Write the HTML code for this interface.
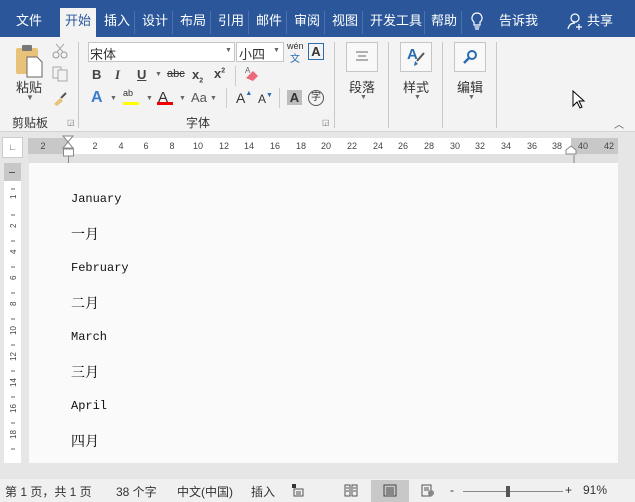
<!DOCTYPE html>
<html><head><meta charset="utf-8"><style>
*{margin:0;padding:0;box-sizing:border-box}
body{width:635px;height:502px;overflow:hidden;background:#e6e6e6;font-family:"Liberation Sans","Noto Sans CJK SC",sans-serif;position:relative;color:#333}
.a{position:absolute}
.tab{position:absolute;top:10px;color:#fff;font-size:13px}
.sep{position:absolute;top:11px;width:1px;height:23px;background:#4a72b0}
.rb{position:absolute;top:37px;left:0;width:635px;height:95px;background:#f3f3f3;border-bottom:1px solid #d4d4d4}
.vs{position:absolute;top:42px;width:1px;height:86px;background:#c8c8c8}
.lbl{position:absolute;font-size:12px;color:#333}
.ic{position:absolute;font-size:13px;font-weight:bold;color:#444}
.rn{position:absolute;top:141px;font-size:9px;color:#444;width:20px;text-align:center}
.en{position:absolute;left:71px;font-family:"Liberation Mono",monospace;font-size:12px;color:#111}
.zh{position:absolute;left:71px;font-family:"Noto Serif CJK SC","Noto Sans CJK SC",serif;font-size:14px;color:#000}
.st{position:absolute;top:483px;font-size:12px;color:#333}
</style></head><body>
<!-- title/tab bar -->
<div class="a" style="left:0;top:0;width:635px;height:37px;background:#2b579a"></div>
<div class="a" style="left:60px;top:8px;width:36px;height:30px;background:#f3f3f3"></div>
<span class="tab" style="left:16px">文件</span>
<span class="tab" style="left:65px;color:#2b579a">开始</span>
<span class="tab" style="left:104px">插入</span>
<span class="sep" style="left:134px"></span>
<span class="tab" style="left:142px">设计</span>
<span class="sep" style="left:172px"></span>
<span class="tab" style="left:180px">布局</span>
<span class="sep" style="left:210px"></span>
<span class="tab" style="left:218px">引用</span>
<span class="sep" style="left:248px"></span>
<span class="tab" style="left:256px">邮件</span>
<span class="sep" style="left:286px"></span>
<span class="tab" style="left:294px">审阅</span>
<span class="sep" style="left:324px"></span>
<span class="tab" style="left:332px">视图</span>
<span class="sep" style="left:362px"></span>
<span class="tab" style="left:370px">开发工具</span>
<span class="sep" style="left:424px"></span>
<span class="tab" style="left:431px">帮助</span>
<span class="sep" style="left:461px"></span>
<svg class="a" style="left:470px;top:12px" width="14" height="20"><path d="M7 1a5 5 0 0 0-3 9v3h6v-3a5 5 0 0 0-3-9zM4.5 15h5M5 17h4" stroke="#fff" fill="none" stroke-width="1.2"/></svg>
<span class="tab" style="left:499px">告诉我</span>
<svg class="a" style="left:567px;top:12px" width="18" height="20"><circle cx="8" cy="6" r="4" stroke="#fff" fill="none" stroke-width="1.2"/><path d="M1 17c1-5 4-6 7-6M12 12v6M9 15h6" stroke="#fff" fill="none" stroke-width="1.2"/></svg>
<span class="tab" style="left:587px">共享</span>

<!-- ribbon -->
<div class="rb"></div>
<!-- clipboard -->
<svg class="a" style="left:14px;top:44px" width="32" height="34"><rect x="2" y="4" width="22" height="26" rx="2" fill="#e9c27a"/><rect x="8" y="1" width="10" height="6" rx="1" fill="#777"/><path d="M13 13h10l5 5v15H13z" fill="#fff" stroke="#666"/></svg>
<span class="lbl" style="left:16px;top:77px;font-size:13px">粘贴</span>
<span class="lbl" style="left:26px;top:93px;font-size:8px;color:#666">▼</span>
<span class="lbl" style="left:12px;top:114px">剪贴板</span>
<svg class="a" style="left:52px;top:43px" width="16" height="16"><circle cx="4" cy="12" r="3" stroke="#999" fill="none"/><circle cx="12" cy="12" r="3" stroke="#999" fill="none"/><path d="M5 9L12 1M11 9L4 1" stroke="#aaa"/></svg>
<svg class="a" style="left:52px;top:66px" width="16" height="16"><rect x="1" y="1" width="8" height="11" fill="none" stroke="#aaa"/><rect x="6" y="4" width="9" height="11" fill="#f3f3f3" stroke="#aaa"/></svg>
<svg class="a" style="left:52px;top:90px" width="16" height="16"><path d="M2 14l6-6 3 3-6 5z" fill="#e9c27a"/><path d="M9 8l5-5" stroke="#555" stroke-width="2"/></svg>
<div class="vs" style="left:78px"></div>
<!-- font group -->
<div class="a" style="left:88px;top:42px;width:147px;height:20px;background:#fff;border:1px solid #c6c6c6"></div>
<span class="lbl" style="left:90px;top:44px;font-size:13px">宋体</span>
<span class="lbl" style="left:225px;top:47px;font-size:7px;color:#666">▼</span>
<div class="a" style="left:236px;top:42px;width:48px;height:20px;background:#fff;border:1px solid #c6c6c6"></div>
<span class="lbl" style="left:239px;top:44px;font-size:13px">小四</span>
<span class="lbl" style="left:273px;top:47px;font-size:7px;color:#666">▼</span>
<span class="lbl" style="left:287px;top:41px;font-size:9px">wén</span>
<span class="lbl" style="left:290px;top:50px;font-size:10px;color:#2b6cb0">文</span>
<div class="a" style="left:308px;top:43px;width:16px;height:17px;border:1px solid #2b6cb0;font-size:13px;font-weight:bold;text-align:center;line-height:15px;color:#333">A</div>
<span class="ic" style="left:92px;top:67px">B</span>
<span class="ic" style="left:115px;top:67px;font-style:italic;font-family:'Liberation Serif',serif">I</span>
<span class="ic" style="left:137px;top:67px;text-decoration:underline">U</span>
<span class="lbl" style="left:155px;top:71px;font-size:7px;color:#666">▼</span>
<span class="lbl" style="left:167px;top:68px;font-size:11px;text-decoration:line-through">abc</span>
<span class="ic" style="left:192px;top:67px">x<sub style="font-size:7px">2</sub></span>
<span class="ic" style="left:214px;top:66px">x<sup style="font-size:7px">2</sup></span>
<div class="a" style="left:235px;top:66px;width:1px;height:20px;background:#ccc"></div>
<svg class="a" style="left:242px;top:64px" width="20" height="20"><path d="M4 14l7-7 5 5-5 5z" fill="#e96a7a"/><text x="3" y="9" font-size="8" fill="#666" font-family="Liberation Sans">A</text></svg>
<span class="lbl" style="left:91px;top:89px;font-size:16px;color:#3a7dd0;font-weight:bold">A</span>
<span class="lbl" style="left:110px;top:95px;font-size:7px;color:#666">▼</span>
<span class="lbl" style="left:123px;top:88px;font-size:9px">ab</span>
<div class="a" style="left:123px;top:102px;width:16px;height:3px;background:#ffff00"></div>
<span class="lbl" style="left:146px;top:95px;font-size:7px;color:#666">▼</span>
<span class="lbl" style="left:158px;top:89px;font-size:15px">A</span>
<div class="a" style="left:157px;top:102px;width:16px;height:3px;background:#e00"></div>
<span class="lbl" style="left:179px;top:95px;font-size:7px;color:#666">▼</span>
<span class="lbl" style="left:191px;top:90px;font-size:13px;color:#555">Aa</span>
<span class="lbl" style="left:210px;top:95px;font-size:7px;color:#666">▼</span>
<div class="a" style="left:226px;top:88px;width:1px;height:20px;background:#ccc"></div>
<span class="lbl" style="left:236px;top:90px;font-size:14px">A<span style="font-size:7px;color:#2b6cb0;vertical-align:top">▲</span></span>
<span class="lbl" style="left:258px;top:92px;font-size:12px">A<span style="font-size:7px;color:#2b6cb0;vertical-align:top">▼</span></span>
<div class="a" style="left:279px;top:88px;width:1px;height:20px;background:#ccc"></div>
<div class="a" style="left:287px;top:90px;width:15px;height:15px;background:#bdbdbd;font-size:13px;font-weight:bold;text-align:center;line-height:15px">A</div>
<div class="a" style="left:308px;top:90px;width:16px;height:16px;border:1px solid #555;border-radius:50%;font-size:10px;text-align:center;line-height:14px">字</div>
<span class="lbl" style="left:186px;top:114px">字体</span>
<span class="lbl" style="left:67px;top:118px;font-size:8px;color:#777">◲</span>
<span class="lbl" style="left:322px;top:118px;font-size:8px;color:#777">◲</span>
<div class="vs" style="left:334px"></div>
<!-- big buttons -->
<div class="a" style="left:346px;top:42px;width:32px;height:30px;border:1px solid #c6c6c6;background:#f8f8f8"></div>
<svg class="a" style="left:354px;top:50px" width="16" height="14"><path d="M2 2h12M4 6h8M2 10h12" stroke="#666"/></svg>
<span class="lbl" style="left:349px;top:77px;font-size:13px">段落</span>
<span class="lbl" style="left:360px;top:94px;font-size:7px;color:#666">▼</span>
<div class="vs" style="left:388px"></div>
<div class="a" style="left:400px;top:42px;width:32px;height:30px;border:1px solid #c6c6c6;background:#f8f8f8"></div>
<span class="lbl" style="left:407px;top:46px;font-size:15px;color:#2b6cb0;font-weight:bold">A</span>
<svg class="a" style="left:412px;top:52px" width="14" height="14"><path d="M12 1L5 9" stroke="#555" stroke-width="2"/><path d="M3 9l3 3-4 2z" fill="#2b6cb0"/></svg>
<span class="lbl" style="left:403px;top:77px;font-size:13px">样式</span>
<span class="lbl" style="left:414px;top:94px;font-size:7px;color:#666">▼</span>
<div class="vs" style="left:442px"></div>
<div class="a" style="left:454px;top:42px;width:32px;height:30px;border:1px solid #c6c6c6;background:#f8f8f8"></div>
<svg class="a" style="left:462px;top:49px" width="16" height="16"><circle cx="10" cy="6" r="4" stroke="#2b6cb0" stroke-width="2" fill="none"/><path d="M7 9l-5 5" stroke="#2b6cb0" stroke-width="2.5"/></svg>
<span class="lbl" style="left:457px;top:77px;font-size:13px">编辑</span>
<span class="lbl" style="left:468px;top:94px;font-size:7px;color:#666">▼</span>
<div class="vs" style="left:496px"></div>
<svg class="a" style="left:572px;top:90px" width="14" height="20"><path d="M1 1v15l4-4 3 6 2-1-3-6h5z" fill="#fff" stroke="#000"/></svg>
<span class="lbl" style="left:614px;top:116px;font-size:10px;color:#555">︿</span>

<!-- ruler -->
<div class="a" style="left:0;top:133px;width:635px;height:30px;background:#e6e6e6"></div>
<div class="a" style="left:2px;top:137px;width:21px;height:21px;background:#fff;border:1px solid #ccc;font-size:9px;text-align:center;line-height:19px;font-weight:bold;color:#555">∟</div>
<div class="a" style="left:28px;top:138px;width:590px;height:16px;background:#fff"></div>
<div class="a" style="left:28px;top:138px;width:40px;height:16px;background:#c8c8c8"></div>
<div class="a" style="left:571px;top:138px;width:47px;height:16px;background:#c8c8c8"></div>
<div class="a" style="left:28px;top:154px;width:590px;height:9px;background:#e1e1e1"></div>
<span class="rn" style="left:33px">2</span>
<span class="rn" style="left:85px">2</span><span class="rn" style="left:111px">4</span><span class="rn" style="left:136px">6</span><span class="rn" style="left:162px">8</span><span class="rn" style="left:188px">10</span><span class="rn" style="left:214px">12</span><span class="rn" style="left:239px">14</span><span class="rn" style="left:265px">16</span><span class="rn" style="left:291px">18</span><span class="rn" style="left:316px">20</span><span class="rn" style="left:342px">22</span><span class="rn" style="left:368px">24</span><span class="rn" style="left:393px">26</span><span class="rn" style="left:419px">28</span><span class="rn" style="left:445px">30</span><span class="rn" style="left:470px">32</span><span class="rn" style="left:496px">34</span><span class="rn" style="left:522px">36</span><span class="rn" style="left:547px">38</span><span class="rn" style="left:573px">40</span><span class="rn" style="left:599px">42</span>
<svg class="a" style="left:62px;top:135px" width="14" height="50"><path d="M1 1h10L6 7zM6 7l5 6H1z" fill="#fff" stroke="#888"/><rect x="1.5" y="14" width="10" height="7" fill="#fff" stroke="#888"/><path d="M6.5 21v24H-6" stroke="#888" fill="none"/></svg>
<svg class="a" style="left:565px;top:145px" width="30" height="40"><path d="M1 9V5l5-4 5 4v4z" fill="#fff" stroke="#888"/><path d="M9 10v25h20" stroke="#888" fill="none"/></svg>
<!-- vertical ruler -->
<div class="a" style="left:4px;top:163px;width:17px;height:300px;background:#fff"></div>
<div class="a" style="left:4px;top:163px;width:17px;height:18px;background:#c8c8c8"></div>
<div class="a" style="left:9px;top:172px;width:6px;height:1px;background:#555"></div>
<svg class="a" style="left:4px;top:181px" width="17" height="282"><g stroke="#666"><path d="M7 8h4M7 34h4M7 60h4M7 86h4M7 112h4M7 138h4M7 164h4M7 190h4M7 216h4M7 242h4M7 268h4"/></g><g font-size="8" fill="#444" font-family="Liberation Sans"><text transform="translate(12 18) rotate(-90)">1</text><text transform="translate(12 47) rotate(-90)">2</text><text transform="translate(12 73) rotate(-90)">4</text><text transform="translate(12 99) rotate(-90)">6</text><text transform="translate(12 125) rotate(-90)">8</text><text transform="translate(12 154) rotate(-90)">10</text><text transform="translate(12 180) rotate(-90)">12</text><text transform="translate(12 206) rotate(-90)">14</text><text transform="translate(12 232) rotate(-90)">16</text><text transform="translate(12 258) rotate(-90)">18</text></g></svg>
<!-- page -->
<div class="a" style="left:29px;top:163px;width:589px;height:300px;background:#fafafa"></div>
<span class="en" style="left:71px;top:192px">January</span>
<span class="zh" style="top:224px">一月</span>
<span class="en" style="top:261px">February</span>
<span class="zh" style="top:293px">二月</span>
<span class="en" style="top:330px">March</span>
<span class="zh" style="top:362px">三月</span>
<span class="en" style="top:399px">April</span>
<span class="zh" style="top:431px">四月</span>

<!-- status bar -->
<div class="a" style="left:0;top:479px;width:635px;height:23px;background:#f0f0f0"></div>
<span class="st" style="left:5px">第 1 页，共 1 页</span>
<span class="st" style="left:116px">38 个字</span>
<span class="st" style="left:177px">中文(中国)</span>
<span class="st" style="left:251px">插入</span>
<svg class="a" style="left:292px;top:484px" width="12" height="13"><rect x="0" y="0" width="4" height="4" fill="#333"/><path d="M2 5h9v7H2z" fill="none" stroke="#555"/><path d="M4 8h5M4 10h5" stroke="#555"/></svg>
<svg class="a" style="left:344px;top:484px" width="14" height="13"><path d="M1 1h5v11H1zM8 1h5v11H8zM2 4h3M2 7h3M9 4h3M9 7h3" stroke="#555" fill="none"/></svg>
<div class="a" style="left:371px;top:480px;width:38px;height:22px;background:#c8c8c8"></div>
<svg class="a" style="left:383px;top:484px" width="14" height="13"><path d="M1 1h12v11H1zM3 4h8M3 6h8M3 8h8M3 10h8" stroke="#444" fill="none"/></svg>
<svg class="a" style="left:421px;top:484px" width="14" height="13"><path d="M1 1h9v11H1zM3 4h5M3 6h5" stroke="#555" fill="none"/><circle cx="10" cy="9" r="3" fill="#888"/></svg>
<span class="st" style="left:450px">-</span>
<div class="a" style="left:463px;top:491px;width:100px;height:1px;background:#888"></div>
<div class="a" style="left:506px;top:486px;width:4px;height:11px;background:#555"></div>
<span class="st" style="left:565px">+</span>
<span class="st" style="left:583px">91%</span>
</body></html>
